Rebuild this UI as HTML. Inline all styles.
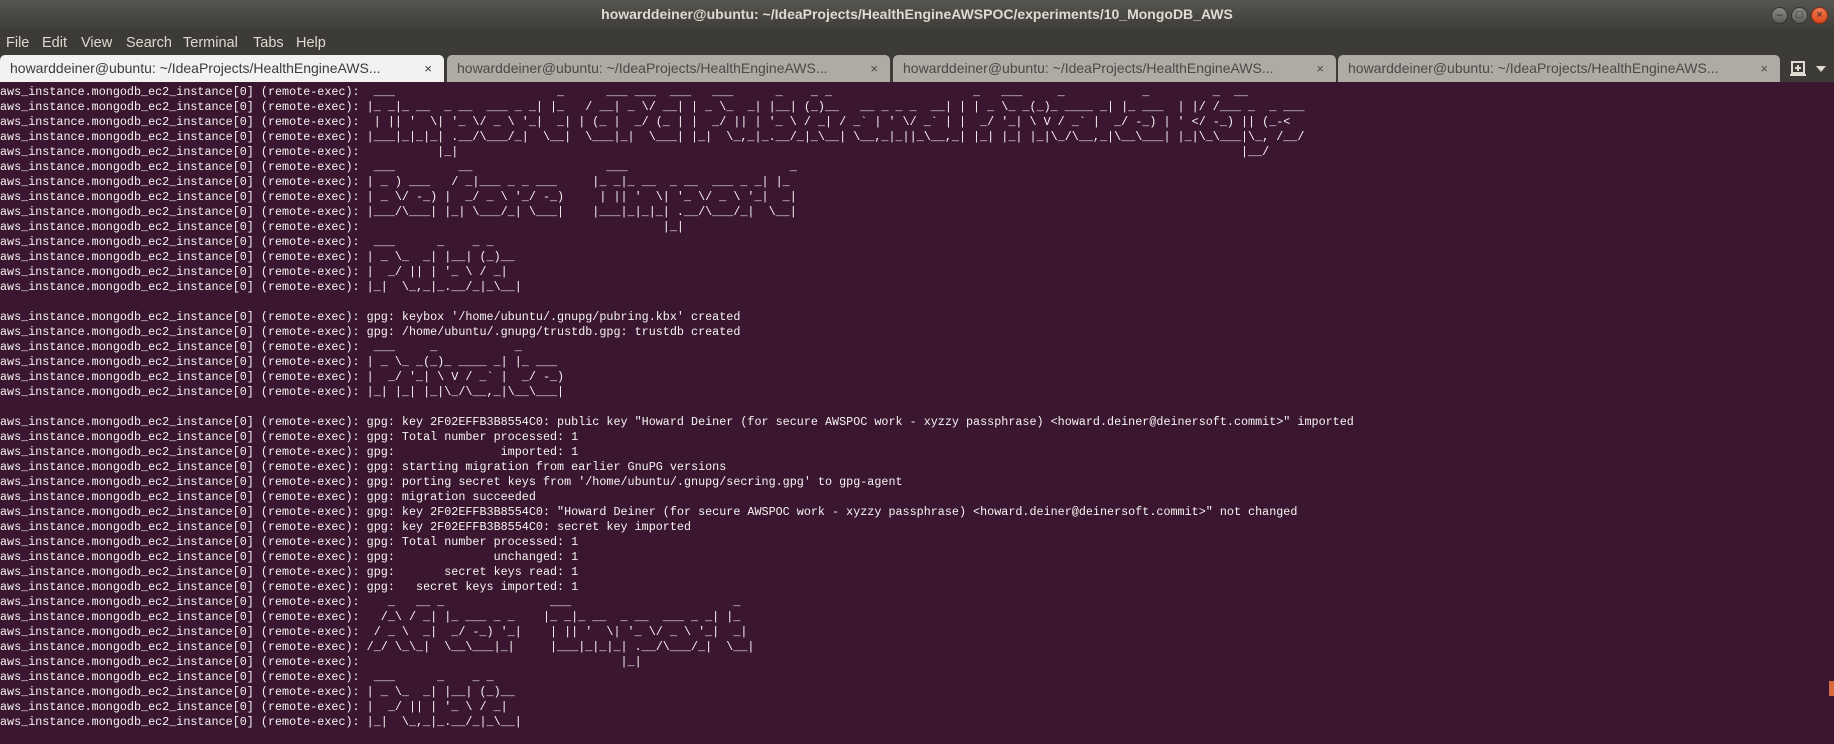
<!DOCTYPE html>
<html><head><meta charset="utf-8"><style>
*{margin:0;padding:0;box-sizing:border-box}
body{width:1834px;height:744px;overflow:hidden;background:#3b1631;font-family:"Liberation Sans",sans-serif;position:relative}
#title{position:absolute;left:0;top:0;width:1834px;height:28px;background:linear-gradient(#57554f,#3f3e3a);color:#dfdbd2;font-weight:bold;font-size:14px;text-align:center;line-height:29px}
#menu{position:absolute;left:0;top:28px;width:1834px;height:54px;background:#3c3b37}
#menu span{position:absolute;top:1px;color:#dfdbd2;font-size:14.5px;line-height:28px}
.tab{position:absolute;top:55px;height:27px;background:#aeaaa4;border-radius:5px 5px 0 0;color:#4c4a47;font-size:14px;line-height:27px;padding-left:10px;white-space:nowrap}
.tab.active{background:#f2f1f0;color:#3c3c3c}
.tab .x{position:absolute;right:12px;top:0;font-size:13px}
.wb{position:absolute;top:7px;width:17px;height:17px;border-radius:50%;background:linear-gradient(#8a8983,#5d5c57);border:1px solid #333;color:#2b2b2b;font-size:11px;text-align:center;line-height:15px}
#term{position:absolute;left:0;top:85px;font-family:"Liberation Mono",monospace;font-size:11.75px;line-height:15px;color:#f6f5f2;white-space:pre}
</style></head><body>
<div id="title">howarddeiner@ubuntu: ~/IdeaProjects/HealthEngineAWSPOC/experiments/10_MongoDB_AWS</div>
<div class="wb" style="left:1771px">&#8211;</div>
<div class="wb" style="left:1791px">&#9633;</div>
<div class="wb" style="left:1811px;background:linear-gradient(#f27a4f,#d9481c);border-color:#8a2d10">&#215;</div>
<div id="menu">
<span style="left:6px">File</span><span style="left:42px">Edit</span><span style="left:81px">View</span><span style="left:126px">Search</span><span style="left:183px">Terminal</span><span style="left:253px">Tabs</span><span style="left:296px">Help</span>
</div>
<div class="tab active" style="left:0;width:444px">howarddeiner@ubuntu: ~/IdeaProjects/HealthEngineAWS...<span class="x">×</span></div>
<div class="tab" style="left:447px;width:443px">howarddeiner@ubuntu: ~/IdeaProjects/HealthEngineAWS...<span class="x">×</span></div>
<div class="tab" style="left:893px;width:443px">howarddeiner@ubuntu: ~/IdeaProjects/HealthEngineAWS...<span class="x">×</span></div>
<div class="tab" style="left:1338px;width:442px">howarddeiner@ubuntu: ~/IdeaProjects/HealthEngineAWS...<span class="x">×</span></div>
<svg style="position:absolute;left:1789px;top:60px" width="20" height="18" viewBox="0 0 20 18"><rect x="3" y="2" width="12" height="11" fill="none" stroke="#dfdbd2" stroke-width="2"/><path d="M9 5v6M6 8h6M1 15h16" stroke="#dfdbd2" stroke-width="2"/></svg>
<svg style="position:absolute;left:1816px;top:66px" width="12" height="8"><path d="M0 0h10l-5 6z" fill="#dfdbd2"/></svg>
<div style="position:absolute;left:1829px;top:681px;width:5px;height:15px;background:#d9693e"></div>
<div id="term">aws_instance.mongodb_ec2_instance[0] (remote-exec):  ___                       _      ___ ___  ___   ___      _    _ _                    _   ___     _           _         _  __
aws_instance.mongodb_ec2_instance[0] (remote-exec): |_ _|_ __  _ __  ___ _ _| |_   / __| _ \/ __| | _ \_  _| |__| (_)__   __ _ _ _  __| | | _ \_ _(_)_ ____ _| |_ ___  | |/ /___ _  _ ___
aws_instance.mongodb_ec2_instance[0] (remote-exec):  | || '  \| '_ \/ _ \ '_|  _| | (_ |  _/ (_ | |  _/ || | '_ \ / _| / _` | ' \/ _` | |  _/ '_| \ V / _` |  _/ -_) | ' &lt;/ -_) || (_-&lt;
aws_instance.mongodb_ec2_instance[0] (remote-exec): |___|_|_|_| .__/\___/_|  \__|  \___|_|  \___| |_|  \_,_|_.__/_|_\__| \__,_|_||_\__,_| |_| |_| |_|\_/\__,_|\__\___| |_|\_\___|\_, /__/
aws_instance.mongodb_ec2_instance[0] (remote-exec):           |_|                                                                                                               |__/
aws_instance.mongodb_ec2_instance[0] (remote-exec):  ___         __                   ___                       _
aws_instance.mongodb_ec2_instance[0] (remote-exec): | _ ) ___   / _|___ _ _ ___     |_ _|_ __  _ __  ___ _ _| |_
aws_instance.mongodb_ec2_instance[0] (remote-exec): | _ \/ -_) |  _/ _ \ '_/ -_)     | || '  \| '_ \/ _ \ '_|  _|
aws_instance.mongodb_ec2_instance[0] (remote-exec): |___/\___| |_| \___/_| \___|    |___|_|_|_| .__/\___/_|  \__|
aws_instance.mongodb_ec2_instance[0] (remote-exec):                                           |_|
aws_instance.mongodb_ec2_instance[0] (remote-exec):  ___      _    _ _
aws_instance.mongodb_ec2_instance[0] (remote-exec): | _ \_  _| |__| (_)__
aws_instance.mongodb_ec2_instance[0] (remote-exec): |  _/ || | '_ \ / _|
aws_instance.mongodb_ec2_instance[0] (remote-exec): |_|  \_,_|_.__/_|_\__|

aws_instance.mongodb_ec2_instance[0] (remote-exec): gpg: keybox '/home/ubuntu/.gnupg/pubring.kbx' created
aws_instance.mongodb_ec2_instance[0] (remote-exec): gpg: /home/ubuntu/.gnupg/trustdb.gpg: trustdb created
aws_instance.mongodb_ec2_instance[0] (remote-exec):  ___     _           _
aws_instance.mongodb_ec2_instance[0] (remote-exec): | _ \_ _(_)_ ____ _| |_ ___
aws_instance.mongodb_ec2_instance[0] (remote-exec): |  _/ '_| \ V / _` |  _/ -_)
aws_instance.mongodb_ec2_instance[0] (remote-exec): |_| |_| |_|\_/\__,_|\__\___|

aws_instance.mongodb_ec2_instance[0] (remote-exec): gpg: key 2F02EFFB3B8554C0: public key "Howard Deiner (for secure AWSPOC work - xyzzy passphrase) &lt;howard.deiner@deinersoft.commit&gt;" imported
aws_instance.mongodb_ec2_instance[0] (remote-exec): gpg: Total number processed: 1
aws_instance.mongodb_ec2_instance[0] (remote-exec): gpg:               imported: 1
aws_instance.mongodb_ec2_instance[0] (remote-exec): gpg: starting migration from earlier GnuPG versions
aws_instance.mongodb_ec2_instance[0] (remote-exec): gpg: porting secret keys from '/home/ubuntu/.gnupg/secring.gpg' to gpg-agent
aws_instance.mongodb_ec2_instance[0] (remote-exec): gpg: migration succeeded
aws_instance.mongodb_ec2_instance[0] (remote-exec): gpg: key 2F02EFFB3B8554C0: "Howard Deiner (for secure AWSPOC work - xyzzy passphrase) &lt;howard.deiner@deinersoft.commit&gt;" not changed
aws_instance.mongodb_ec2_instance[0] (remote-exec): gpg: key 2F02EFFB3B8554C0: secret key imported
aws_instance.mongodb_ec2_instance[0] (remote-exec): gpg: Total number processed: 1
aws_instance.mongodb_ec2_instance[0] (remote-exec): gpg:              unchanged: 1
aws_instance.mongodb_ec2_instance[0] (remote-exec): gpg:       secret keys read: 1
aws_instance.mongodb_ec2_instance[0] (remote-exec): gpg:   secret keys imported: 1
aws_instance.mongodb_ec2_instance[0] (remote-exec):    _   __ _               ___                       _
aws_instance.mongodb_ec2_instance[0] (remote-exec):   /_\ / _| |_ ___ _ _    |_ _|_ __  _ __  ___ _ _| |_
aws_instance.mongodb_ec2_instance[0] (remote-exec):  / _ \  _|  _/ -_) '_|    | || '  \| '_ \/ _ \ '_|  _|
aws_instance.mongodb_ec2_instance[0] (remote-exec): /_/ \_\_|  \__\___|_|     |___|_|_|_| .__/\___/_|  \__|
aws_instance.mongodb_ec2_instance[0] (remote-exec):                                     |_|
aws_instance.mongodb_ec2_instance[0] (remote-exec):  ___      _    _ _
aws_instance.mongodb_ec2_instance[0] (remote-exec): | _ \_  _| |__| (_)__
aws_instance.mongodb_ec2_instance[0] (remote-exec): |  _/ || | '_ \ / _|
aws_instance.mongodb_ec2_instance[0] (remote-exec): |_|  \_,_|_.__/_|_\__|</div>
</body></html>
